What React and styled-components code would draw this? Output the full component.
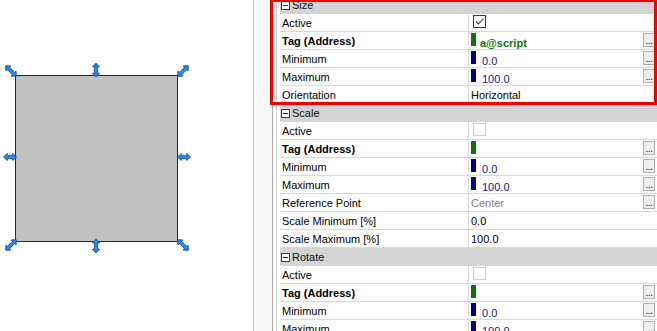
import React from "react";
import styled, { createGlobalStyle } from "styled-components";

const GlobalStyle = createGlobalStyle`
  html, body { margin: 0; padding: 0; background: #fff; }
  body {
    font-family: "Liberation Sans", Arial, sans-serif;
    font-size: 11px;
    color: #000;
  }
`;

const Page = styled.div`
  display: flex;
  width: 657px;
  height: 331px;
  overflow: hidden;
  background: #fff;
`;

/* design canvas on the left */
const Canvas = styled.div`
  position: relative;
  flex: none;
  width: 253px;
  background: #fff;
  border-right: 1px solid #c8c8c8;
`;

const Shape = styled.div`
  position: absolute;
  left: 15px;
  top: 75px;
  width: 161px;
  height: 165px;
  background: #c0c0c0;
  border: 1px solid #262626;
`;

const Handle = styled.div`
  position: absolute;
  left: ${(p) => p.$x}px;
  top: ${(p) => p.$y}px;
  width: 8px;
  height: ${(p) => p.$len}px;
  transform: translate(-50%, -50%) rotate(${(p) => p.$angle}deg);
  line-height: 0;
`;

const Arrow = ({ len }) => (
  <svg width="8" height={len} viewBox={`0 0 8 ${len}`}>
    <polygon
      points={`4,0.5 7.5,4.4 5.6,4.4 5.6,${len - 4.4} 7.5,${len - 4.4} 4,${len - 0.5} 0.5,${len - 4.4} 2.4,${len - 4.4} 2.4,4.4 0.5,4.4`}
      fill="#2f86ea"
      stroke="#0b4fae"
      strokeWidth="0.9"
      strokeLinejoin="round"
    />
  </svg>
);

const handles = [
  { x: 10.5, y: 70.5, angle: -45, len: 16 },
  { x: 96, y: 69.5, angle: 0, len: 15 },
  { x: 182.5, y: 70.5, angle: 45, len: 16 },
  { x: 9.5, y: 157, angle: 90, len: 14 },
  { x: 184, y: 157, angle: 90, len: 14 },
  { x: 10.5, y: 244.5, angle: 45, len: 16 },
  { x: 96, y: 245.5, angle: 0, len: 15 },
  { x: 182.5, y: 244.5, angle: -45, len: 16 },
];

/* property grid */
const Gap = styled.div`
  flex: none;
  width: 18px;
  background: #fafafa;
`;

const Frame = styled.div`
  position: relative;
  flex: 1;
  display: flex;
  min-width: 0;
  border-left: 1px solid #a8a8a8;
  padding-left: 3px;
`;

const Inner = styled.div`
  flex: 1;
  min-width: 0;
  border-left: 1px solid #cfcfcf;
  padding-left: 3px;
  overflow: hidden;
`;

const List = styled.div`
  margin-top: -4px;
`;

const Highlight = styled.div`
  position: absolute;
  left: -3px;
  right: 0;
  top: -1px;
  height: 106px;
  box-sizing: border-box;
  border: 3px solid #f00000;
  pointer-events: none;
`;

const Header = styled.div`
  display: flex;
  align-items: center;
  height: 18px;
  line-height: 18px;
  background: #d4d4d4;
  color: #111;
`;

const MinusBox = styled.span`
  position: relative;
  box-sizing: border-box;
  width: 9px;
  height: 9px;
  margin-left: 1px;
  margin-right: 2px;
  border: 1px solid #3a3a3a;
  background: #fff;

  &::after {
    content: "";
    position: absolute;
    left: 1px;
    right: 1px;
    top: 3px;
    height: 1px;
    background: #2a2a2a;
  }
`;

const Row = styled.div`
  display: grid;
  grid-template-columns: 189px 1fr;
  height: 18px;
  box-sizing: border-box;
  border-bottom: 1px solid #d8d8d8;
  background: #fff;
`;

const Label = styled.div`
  box-sizing: border-box;
  padding: 1px 0 0 2px;
  line-height: 16px;
  border-right: 1px solid #d8d8d8;
  font-weight: ${(p) => (p.$bold ? 700 : 400)};
  white-space: nowrap;
  overflow: hidden;
`;

const Value = styled.div`
  display: flex;
  align-items: flex-start;
  padding-left: 2px;
  min-width: 0;
`;

const PlainText = styled.span`
  padding-top: 1px;
  line-height: 16px;
  color: ${(p) => p.$color || "#000"};
`;

const Bar = styled.span`
  flex: none;
  width: 5px;
  height: 13px;
  margin-top: 1px;
  background: ${(p) => p.$color};
`;

const BarText = styled.span`
  margin-top: 5px;
  margin-left: ${(p) => (p.$bold ? 4 : 6)}px;
  line-height: 12px;
  color: ${(p) => p.$color};
  font-weight: ${(p) => (p.$bold ? 700 : 400)};
`;

const CheckBox = styled.span`
  display: flex;
  align-items: center;
  justify-content: center;
  box-sizing: border-box;
  width: 13px;
  height: 13px;
  margin: 1px 0 0 2px;
  background: #fff;
  border: 1px solid ${(p) => (p.$enabled ? "#3c3c3c" : "#cdcdcd")};
`;

const DotsButton = styled.span`
  display: flex;
  align-items: flex-end;
  justify-content: center;
  box-sizing: border-box;
  width: 12px;
  height: 14px;
  margin: 1px 2px 0 auto;
  padding-bottom: 1px;
  background: #f0f0f0;
  border: 1px solid #adadad;
  font-size: 10px;
  line-height: 9px;
  letter-spacing: -0.5px;
  color: #000;
`;

const GREEN = "#0b730b";
const BLUE = "#000096";

const sections = [
  {
    title: "Size",
    rows: [
      { label: "Active", kind: "check", checked: true },
      { label: "Tag (Address)", bold: true, kind: "tag", value: "a@script", button: true },
      { label: "Minimum", kind: "num", value: "0.0", button: true },
      { label: "Maximum", kind: "num", value: "100.0", button: true },
      { label: "Orientation", kind: "text", value: "Horizontal" },
    ],
  },
  {
    title: "Scale",
    rows: [
      { label: "Active", kind: "check" },
      { label: "Tag (Address)", bold: true, kind: "tag", value: "", button: true },
      { label: "Minimum", kind: "num", value: "0.0", button: true },
      { label: "Maximum", kind: "num", value: "100.0", button: true },
      { label: "Reference Point", kind: "text", value: "Center", muted: true, button: true },
      { label: "Scale Minimum [%]", kind: "text", value: "0.0" },
      { label: "Scale Maximum [%]", kind: "text", value: "100.0" },
    ],
  },
  {
    title: "Rotate",
    rows: [
      { label: "Active", kind: "check" },
      { label: "Tag (Address)", bold: true, kind: "tag", value: "", button: true },
      { label: "Minimum", kind: "num", value: "0.0", button: true },
      { label: "Maximum", kind: "num", value: "100.0", button: true },
    ],
  },
];

const PropValue = ({ row }) => {
  if (row.kind === "check") {
    return (
      <CheckBox $enabled={row.checked}>
        {row.checked && (
          <svg width="11" height="11" viewBox="0 0 11 11">
            <path d="M2 5.5 L4.5 8 L9.5 2.5" fill="none" stroke="#3a3a3a" strokeWidth="1.1" />
          </svg>
        )}
      </CheckBox>
    );
  }
  if (row.kind === "tag" || row.kind === "num") {
    const color = row.kind === "tag" ? GREEN : BLUE;
    return (
      <>
        <Bar $color={color} />
        {row.value && (
          <BarText $color={row.kind === "tag" ? GREEN : "#14148a"} $bold={row.kind === "tag"}>
            {row.value}
          </BarText>
        )}
      </>
    );
  }
  return <PlainText $color={row.muted ? "#7d7d7d" : "#000"}>{row.value}</PlainText>;
};

export default function App() {
  return (
    <>
      <GlobalStyle />
      <Page>
        <Canvas>
          <Shape />
          {handles.map((h, i) => (
            <Handle key={i} $x={h.x} $y={h.y} $angle={h.angle} $len={h.len}>
              <Arrow len={h.len} />
            </Handle>
          ))}
        </Canvas>
        <Gap />
        <Frame>
          <Inner>
            <List>
              {sections.map((s) => (
                <React.Fragment key={s.title}>
                  <Header>
                    <MinusBox />
                    {s.title}
                  </Header>
                  {s.rows.map((r, i) => (
                    <Row key={i}>
                      <Label $bold={r.bold}>{r.label}</Label>
                      <Value>
                        <PropValue row={r} />
                        {r.button && <DotsButton>...</DotsButton>}
                      </Value>
                    </Row>
                  ))}
                </React.Fragment>
              ))}
            </List>
          </Inner>
          <Highlight />
        </Frame>
      </Page>
    </>
  );
}
